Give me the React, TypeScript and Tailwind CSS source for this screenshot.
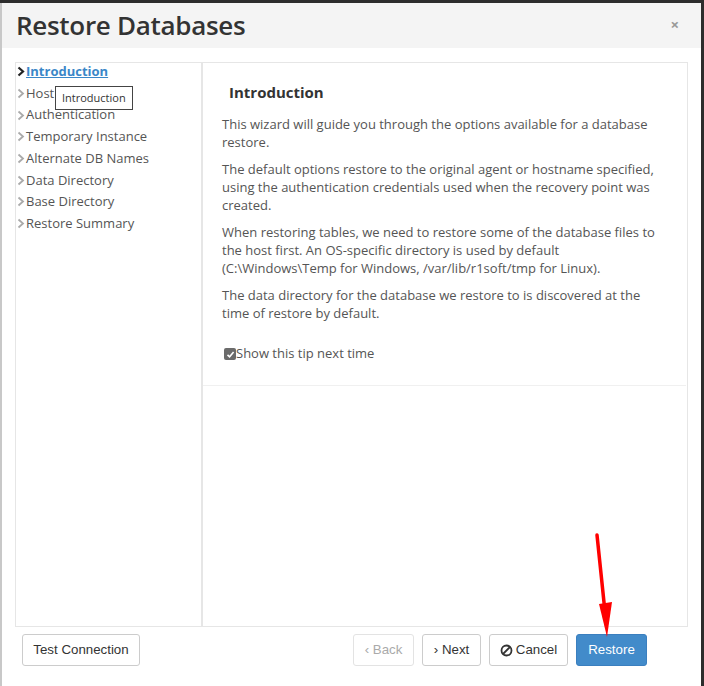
import React from "react";

const navItems = [
  "Host",
  "Authentication",
  "Temporary Instance",
  "Alternate DB Names",
  "Data Directory",
  "Base Directory",
  "Restore Summary",
];

function Chevron({ dark }: { dark?: boolean }) {
  return (
    <svg width="8" height="11" viewBox="0 0 8 11" className="shrink-0">
      <path
        d="M1.5 1.5 L6 5.5 L1.5 9.5"
        fill="none"
        stroke={dark ? "#222" : "#aaa"}
        strokeWidth={dark ? 2.2 : 1.8}
      />
    </svg>
  );
}

export default function App() {
  return (
    <div
      className="w-[704px] h-[686px] bg-[#2d2d2d] pt-[3px] overflow-hidden relative"
      style={{ fontFamily: '"Open Sans", "Noto Sans", sans-serif' }}
    >
      <div className="w-[701px] h-[683px] bg-white border-l-2 border-[#c8c8c8] flex flex-col">
        {/* header */}
        <div className="h-[45px] bg-[#f4f4f4] flex items-center justify-between pl-[14px] pr-[22px]">
          <h1 className="text-[26px] font-semibold text-[#333] leading-none tracking-[-0.3px] mt-[-2px]">
            Restore Databases
          </h1>
          <span className="text-[#999] text-[15px] font-bold leading-none mt-[-2px]">×</span>
        </div>

        {/* body */}
        <div className="pt-[14px] pl-[13px] pr-[13px]">
          <div className="h-[565px] border border-[#e6e6e6] flex">
            <div className="w-[187px] border-r-2 border-[#e6e6e6] relative">
              <div className="-mt-[2px]">
                <div className="flex items-center h-[21.7px] pl-[1px]">
                  <Chevron dark />
                  <span className="text-[13px] font-bold text-[#3a87c8] underline ml-[1px]">
                    Introduction
                  </span>
                </div>
                {navItems.map((n) => (
                  <div key={n} className="flex items-center h-[21.7px] pl-[1px]">
                    <Chevron />
                    <span className="text-[13px] text-[#555] ml-[1px]">{n}</span>
                  </div>
                ))}
              </div>
              <div className="absolute left-[39px] top-[23px] border border-[#444] bg-white px-[6px] h-[24px] flex items-center text-[11px] text-[#333]">
                Introduction
              </div>
            </div>
            <div className="flex-1">
              <div className="h-[323px] border-b border-[#f0f0f0] mr-[1px] pl-[19px] pr-[16px] pt-[16px]">
                <h2 className="text-[15px] font-bold text-[#333] pl-[7px] leading-[26px]">
                  Introduction
                </h2>
                <div className="text-[13px] text-[#555] leading-[18px] mt-[10px]">
                  <p>This wizard will guide you through the options available for a database restore.</p>
                  <p className="mt-[9px]">
                    The default options restore to the original agent or hostname specified, using the
                    authentication credentials used when the recovery point was created.
                  </p>
                  <p className="mt-[9px]">
                    When restoring tables, we need to restore some of the database files to the host
                    first. An OS-specific directory is used by default (C:\Windows\Temp for Windows,
                    /var/lib/r1soft/tmp for Linux).
                  </p>
                  <p className="mt-[9px]">
                    The data directory for the database we restore to is discovered at the time of
                    restore by default.
                  </p>
                  <div className="flex items-center mt-[22px]">
                    <span className="w-[12px] h-[12px] rounded-[2px] bg-[#6b6b6b] flex items-center justify-center ml-[2px] mt-[2px]">
                      <svg width="9" height="9" viewBox="0 0 9 9">
                        <path d="M1.5 4.8 L3.6 6.8 L7.6 2" fill="none" stroke="#fff" strokeWidth="1.6" />
                      </svg>
                    </span>
                    <span>Show this tip next time</span>
                  </div>
                </div>
              </div>
            </div>
          </div>

          {/* footer */}
          <div
            className="flex items-center mt-[7px] pl-[7px] text-[13.3px]"
            style={{ fontFamily: '"Liberation Sans", Arial, sans-serif' }}
          >
            <button className="h-[32px] w-[118px] border border-[#ccc] rounded-[3px] bg-white text-[#333]">
              Test Connection
            </button>
            <div className="flex-1" />
            <div className="flex items-center gap-[8px] mr-[41px]">
              <button className="h-[32px] w-[61px] border border-[#e3e3e3] rounded-[3px] bg-white text-[#aaa]">
                ‹ Back
              </button>
              <button className="h-[32px] w-[59px] border border-[#ccc] rounded-[3px] bg-white text-[#333]">
                › Next
              </button>
              <button className="h-[32px] w-[79px] border border-[#ccc] rounded-[3px] bg-white text-[#333] flex items-center justify-center gap-[3px]">
                <svg width="13" height="13" viewBox="0 0 13 13">
                  <circle cx="6.5" cy="6.5" r="5" fill="none" stroke="#333" strokeWidth="1.8" />
                  <path d="M3 10 L10 3" stroke="#333" strokeWidth="1.8" />
                </svg>
                Cancel
              </button>
              <button className="h-[32px] w-[71px] border border-[#3b7fbf] rounded-[3px] bg-[#428bca] text-white">
                Restore
              </button>
            </div>
          </div>
        </div>
      </div>

      {/* red arrow annotation */}
      <svg className="absolute left-0 top-0 pointer-events-none" width="704" height="686">
        <path d="M597 535 L605 612" stroke="#f00" strokeWidth="3.5" strokeLinecap="round" />
        <path d="M599 604 L612 602 L607 637 Z" fill="#f00" />
      </svg>
    </div>
  );
}
